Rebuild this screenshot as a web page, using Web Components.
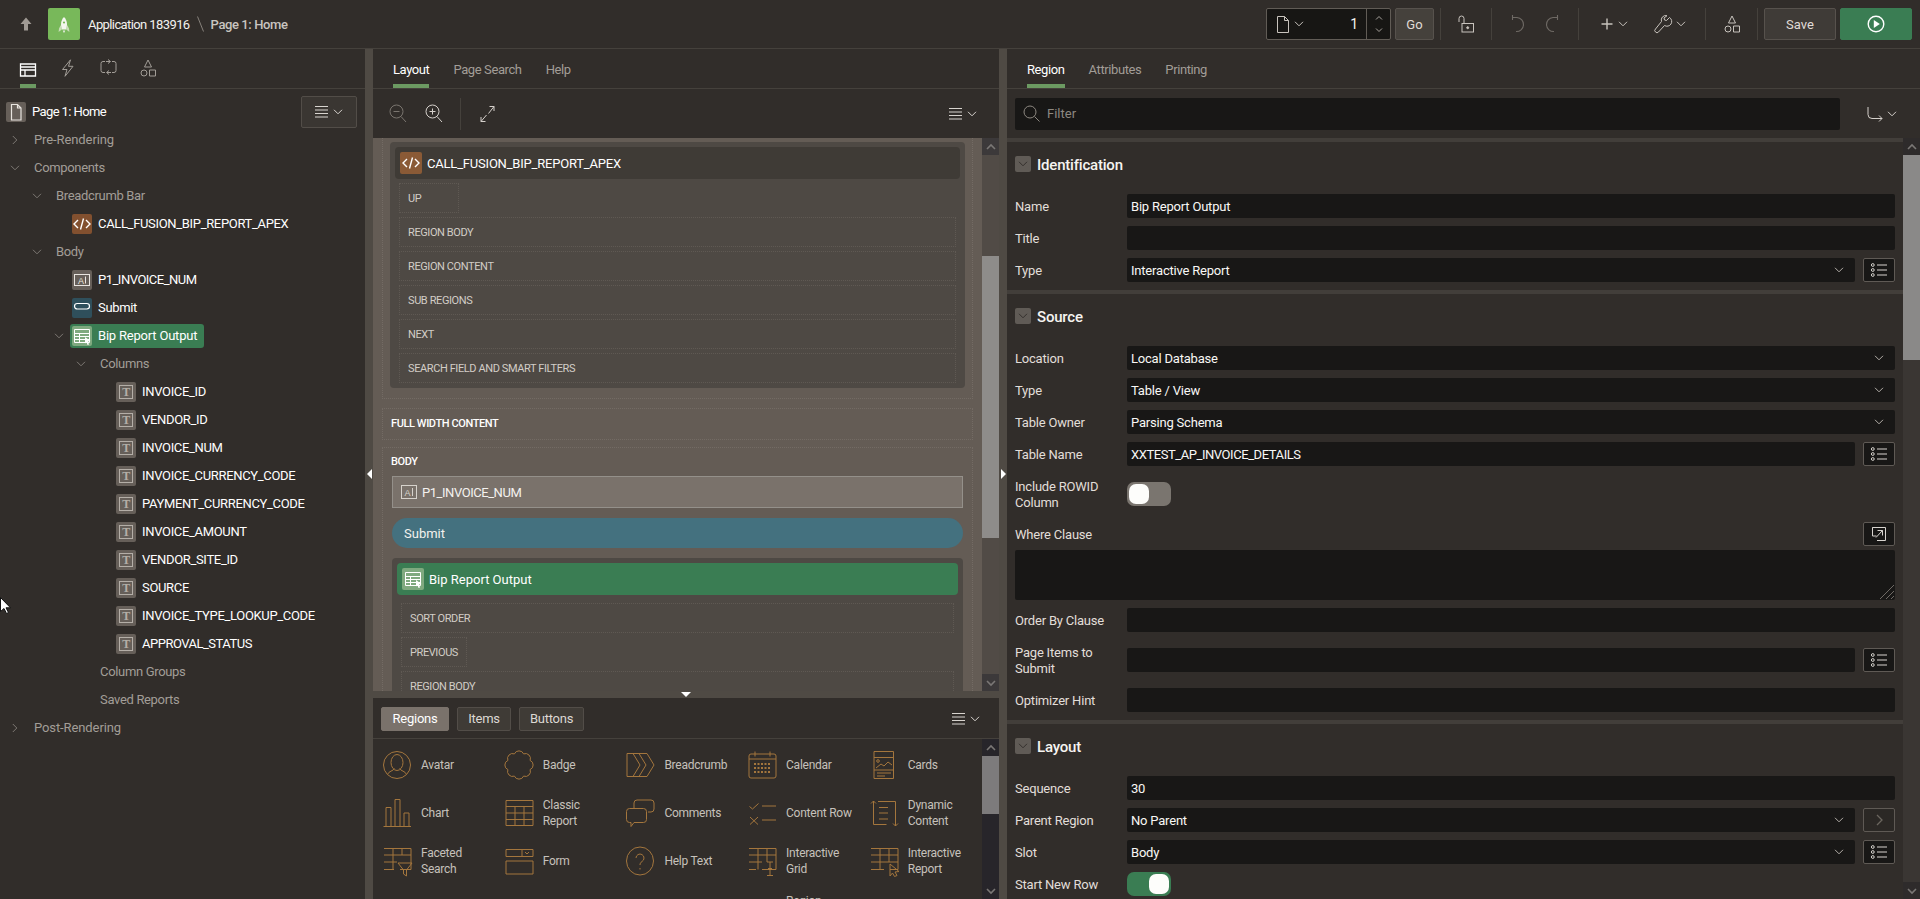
<!DOCTYPE html>
<html lang="en">
<head>
<meta charset="utf-8">
<title>Page Designer</title>
<style>
  html, body { margin: 0; height: 899px; overflow: hidden; background: #312d2a; }
  body { font-family: Roboto, "Open Sans", sans-serif; font-size: 13px; color: #fff; }
</style>
<script>
// icon helpers
const svg = (w, h, inner, extra = '') =>
  `<svg width="${w}" height="${h}" viewBox="0 0 ${w} ${h}" fill="none" stroke="currentColor" stroke-width="1" style="display:block;overflow:visible;flex:none" ${extra}>${inner}</svg>`;

const chevDown = svg(10, 6, '<path d="M1 .8l4 4 4-4"/>');
const burger = svg(13, 12, '<path d="M0 .5h13M0 4h13M0 7.5h13M0 11h13"/>');
const burgerMenu = `<span style="display:flex;align-items:center;gap:5px">${burger}${chevDown}</span>`;

const ICONS = {
  page: svg(20, 20, '<path d="M5.5 2.5h6l3.500 3.500v12h-9.500zM11.500 2.500v3.500h3.500" stroke-width="1.200"/>'),
  code: svg(20, 20, '<path d="M6 6l-4 4 4 4M14 6l4 4-4 4M11.500 4.500l-3 11" stroke-width="1.400"/>'),
  text: svg(20, 20, '<rect x="2.500" y="4.500" width="15" height="11"/><text x="6" y="13.500" font-size="9" font-family="Liberation Sans" fill="currentColor" stroke="none" aria-hidden="true">A</text><path d="M13.500 6.500v7"/>'),
  button: svg(20, 20, '<rect x="2.500" y="5.500" width="15" height="5.500" rx="2.700" stroke-width="1.200"/>'),
  report: svg(20, 20, '<path d="M2.500 3.500h15v13h-15zM2.500 7.500h15M2.500 10.500h15M2.500 13.500h15M7.500 7.500v9"/><path d="M13 11l5.500 4-2.500.500 1 3-1.500.500-1-3-1.500 1.500z" fill="#fff" stroke="none"/>'),
  column: svg(20, 20, '<rect x="3.500" y="3.500" width="13" height="13" stroke-width="1"/><text x="10" y="14" text-anchor="middle" font-size="12" font-family="Liberation Serif" font-weight="700" fill="currentColor" stroke="none" aria-hidden="true">T</text>'),

  rendering: svg(16, 14, '<path d="M.5 1h15v12H.5zM.5 4h15M.5 7h15M5 7v6" stroke-width="1.300"/>'),
  bolt: svg(14, 18, '<path d="M9.500.800L1.500 10.500h4.500l-2 6.800 8-10h-4.500z"/>'),
  loop: svg(17, 16, '<path d="M5 2.500H3a2 2 0 0 0-2 2v7a2 2 0 0 0 2 2h2M12 13.500h2a2 2 0 0 0 2-2v-7a2 2 0 0 0-2-2h-2M8 .500L10.500 2.500 8 4.500M9 11.500l-2.500 2 2.500 2M6 2.500h4M7 13.500h4"/>'),
  shapes: svg(18, 18, '<path d="M9 1l3.500 7h-7zM10.500 11h6v6h-6z"/><circle cx="5" cy="14" r="3"/>'),

  arrowUp: svg(12, 14, '<path d="M6 .5L.5 7H4v6.500h4V7h3.500z" fill="currentColor" stroke="none"/>'),
  rocket: svg(32, 32, '<path d="M16 9c-2 2-3 4.500-3 7.500l.5 5h5l.5-5C19 13.500 18 11 16 9z" fill="#f3f6ef" stroke="none"/><path d="M12.800 17l-1.800 3.500-.4 3.500 2.900-2.300zM19.200 17l1.800 3.500.4 3.500-2.900-2.300z" fill="#c9ddb9" stroke="none"/><path d="M14.800 22.500h2.400l-.6 2h-1.200z" fill="#dfe9d7" stroke="none"/><circle cx="16" cy="14.500" r="1.100" fill="#78b85a" stroke="none"/>'),
  doc: svg(12, 17, '<path d="M.5.500h7l4 4v12H.500zM7.500.500v4h4"/>'),
  lock: svg(18, 18, '<rect x="5" y="8.500" width="11.500" height="8.500"/><circle cx="10.700" cy="12.700" r="1" fill="currentColor"/><path d="M2 7V3.500a2.500 2.500 0 0 1 5 0V8"/>'),
  undo: svg(16, 20, '<path d="M3.500 3.500H8a7 7 0 1 1-1 14M3.500 1v5" stroke-width="1.100"/>'),
  redo: svg(16, 20, '<path d="M12.500 3.500H8a7 7 0 1 0 1 14M12.500 1v5" stroke-width="1.100"/>'),
  plus: svg(12, 12, '<path d="M6 .5v11M.5 6h11" stroke-width="1.400"/>'),
  wrench: svg(17, 19, '<path d="M15.500 2.500l-3 3-2-.5-.5-2 3-2.300a4.500 4.500 0 0 0-5.500 5.800L1.500 14a2 2 0 0 0 0 3 2 2 0 0 0 3 0l6-6.500a4.500 4.500 0 0 0 5-8z"/>'),
  play: svg(18, 18, '<circle cx="9" cy="9" r="7.800" stroke-width="1.400"/><path d="M6.800 5l6 4-6 4z" fill="currentColor" stroke="none"/>'),

  zoomOut: svg(18, 19, '<circle cx="7.500" cy="7.500" r="6.500"/><path d="M4.500 7.500h6M12 12.500l5 5.500"/>'),
  zoomIn: svg(18, 19, '<circle cx="7.500" cy="7.500" r="6.500"/><path d="M4.500 7.500h6M7.500 4.500v6M12 12.500l5 5.500"/>'),
  expand: svg(15, 18, '<path d="M8.500 8.500L14 1.500M9.500 1.500H14V6M6.500 10L1 16.500M1 12v4.500h4.500"/>'),
  search: svg(17, 17, '<circle cx="7" cy="7" r="6"/><path d="M11.500 11.500l5 5"/>'),
  rewind: svg(16, 16, '<path d="M1 1v7.500a4 4 0 0 0 4 4h10M12 9.500l3 3-3 3"/>'),
  list: svg(16, 14, '<circle cx="1.800" cy="2" r="1.400"/><circle cx="1.800" cy="7" r="1.400"/><circle cx="1.800" cy="12" r="1.400"/><path d="M6 2h10M6 7h10M6 12h10"/>'),
  popout: svg(14, 14, '<path d="M5 .5H.5V9h4M.5.500h13v13H5M4 10.500L10.500 3.500M5.500 3.500h5v5" stroke-width="1"/>'),
  next: svg(7, 12, '<path d="M1 1l5 5-5 5" stroke-width="1.300"/>'),
  triL: svg(5, 10, '<path d="M5 0v10L0 5z" fill="currentColor" stroke="none"/>'),
  triR: svg(5, 10, '<path d="M0 0v10l5-5z" fill="currentColor" stroke="none"/>'),
  triD: svg(10, 5, '<path d="M0 0h10L5 5z" fill="currentColor" stroke="none"/>'),
  barUp: svg(10, 6, '<path d="M1 5l4-4 4 4" stroke-width="1.600"/>'),
  barDown: svg(10, 6, '<path d="M1 1l4 4 4-4" stroke-width="1.600"/>'),
};

const GALLERY = {
  avatar: '<ellipse cx="14" cy="14" rx="13.500" ry="13.500"/><ellipse cx="14" cy="11.500" rx="6" ry="8"/><path d="M4.500 23.500c1-3.500 6-3.500 7-6M23.500 23.500c-1-3.500-6-3.500-7-6"/>',
  badge: '<path d="M9.400 2.900A5 5 0 0 1 18.600 2.900A5 5 0 0 1 25.100 9.400A5 5 0 0 1 25.100 18.600A5 5 0 0 1 18.600 25.100A5 5 0 0 1 9.400 25.100A5 5 0 0 1 2.900 18.600A5 5 0 0 1 2.900 9.400A5 5 0 0 1 9.400 2.900z"/>',
  breadcrumb: '<path d="M1 2.500h20l7 11.500-7 11.500H1zM7 2.500L14 14 7 25.500M13 2.500L20 14l-7 11.500"/>',
  calendar: '<rect x="1" y="3" width="27" height="24" rx="2"/><path d="M1 8h27M7 .5v5M22 .5v5"/><path d="M6 13h17M6 17h17M6 21h17" stroke-width="2" stroke-dasharray="2 1.500"/>',
  cards: '<path d="M4 .5h19.500v27H4zM4 6.500h19.500M4 19h19.500M7 22h14M7 25h8"/><circle cx="8" cy="10" r="1.300"/><path d="M6 17l5-4 3 2 4-4 4 3"/>',
  chart: '<path d="M3 27V8.500h5V27M12 27V.5h5V27M21 27V14h5v13M.5 27.500h27.500"/>',
  classic: '<path d="M1 1.500h27v25H1zM1 7.500h27M1 14h27M1 20.500h27M10 7.500v19M19 7.500v19"/>',
  comments: '<path d="M8 9V4a3 3 0 0 1 3-3h14a3 3 0 0 1 3 3v6a3 3 0 0 1-3 3h-3"/><path d="M3.500 9.500h14a3 3 0 0 1 3 3v8a3 3 0 0 1-3 3H8l-3 4v-4H3.500a3 3 0 0 1-3-3v-8a3 3 0 0 1 3-3z"/>',
  contentRow: '<path d="M1.500 7.500l3 2.500 6-5.500M14 7h14M2 18l8 7.500M10 18l-8 7.500M14 21h14"/>',
  dynamic: '<path d="M3.500 2v23.500h13M1 4.500L3.500 2 6 4.500M8 2.500h17.500V27M23 24.500l2.500 2.500 2.500-2.500M9 8.500h9M9 14h9M9 20h9"/>',
  faceted: '<path d="M1 1.500h27v21H17M11 22.500H1zM1 8h27M1 15h13M10 1.500v21M19 1.500v6.500"/><path d="M15 16h14l-5.500 7v6l-3-2v-4z"/>',
  form: '<path d="M1 2.500h27v7H1zM1 14h27v13H1zM17 2.500v7M20 5l2 2 2-2"/>',
  help: '<ellipse cx="14" cy="14" rx="13.500" ry="14"/><path d="M10 11a4 4 0 1 1 6 3.500c-1.500 1-2 2-2 3.500M14 21v1.500"/>',
  grid: '<path d="M1 1.500h27v21H14M8 22.500H1zM1 8h27M1 15h13M10 1.500v21M19 1.500V15"/><path d="M19 15h6M19 28.500h6M22 15v13.500M20 21.500h4"/>',
  ir: '<path d="M1 1.500h27v21h-8M14 22.500H1zM1 8h27M1 15h27M10 1.500v21M19 1.500v13.500"/><path d="M20 17l9 7.500-4 .5 2 3.500-2.500 1-2-3.500-2.500 3z"/>',
};

// base class, subclasses give styles and markup
class BaseElement extends HTMLElement {
  constructor() {
    super();
    this.attachShadow({ mode: 'open' });
  }
  connectedCallback() {
    this.shadowRoot.innerHTML = `<style>${this.constructor.styles}</style>${this.markup()}`;
  }
}

class PaneSplitter extends BaseElement {
  static get styles() {
    return /* css */`
      :host { display: flex; align-items: center; justify-content: center; background: #4f4a44; color: #fff; }
    `;
  }
  markup() { return ICONS[this.getAttribute('arrow')]; }
}

class FakeScrollbar extends BaseElement {
  static get styles() {
    return /* css */`
      :host { display: flex; flex-direction: column; width: 17px; flex: none; background: var(--track, #514b46); }
      .btn { height: 17px; flex: none; display: flex; align-items: center; justify-content: center; background: var(--btn, #3c393a); color: #7a7775; }
      .thumb { background: var(--thumb, #8e8c8a); flex: none; }
      .rest { flex: 1; }
    `;
  }
  markup() {
    const top = this.getAttribute('top') || 0;
    const size = this.getAttribute('size') || 0;
    return /* html */`
      <div class="btn">${ICONS.barUp}</div>
      <div style="height:${top}px;flex:none"></div>
      <div class="thumb" style="height:${size}px"></div>
      <div class="rest"></div>
      <div class="btn">${ICONS.barDown}</div>`;
  }
}

class TabBar extends BaseElement {
  static get styles() {
    return /* css */`
      :host { display: flex; height: 39px; gap: 24px; padding-left: 20px; border-bottom: 1px solid #45413c; flex: none; }
    `;
  }
  markup() { return '<slot></slot>'; }
}

class TabItem extends BaseElement {
  static get styles() {
    return /* css */`
      :host { display: flex; align-items: center; height: 39px; box-sizing: border-box; padding-top: 2px; color: #a29d97; font-size: 13px; letter-spacing: -.4px; position: relative; }
      :host([active]) { color: #fff; box-shadow: inset 0 -4px 0 #6c9a62; }
    `;
  }
  markup() { return '<slot></slot>'; }
}

class TreeRow extends BaseElement {
  static get styles() {
    return /* css */`
      :host { display: flex; align-items: center; height: 28px; color: #a29d97; font-size: 13px; letter-spacing: -.33px; white-space: nowrap; flex: none; }
      :host([icon]) { color: #fff; }
      .arrow { width: 12px; display: flex; justify-content: center; color: #7d7873; flex: none; }
      .content { display: inline-flex; align-items: center; gap: 6px; }
      .label { display: block; margin-bottom: 2px; }
      .tile { width: 20px; height: 20px; border-radius: 2px; background: #665f59; color: #e8e4df; display: block; flex: none; }
      :host([icon=code]) .tile { background: #82502f; color: #fff; }
      :host([icon=button]) .tile { background: #2f4f5b; color: #fff; }
      :host([icon=report]) .tile { background: #7fa97f; color: #fff; }
      :host([icon=column]) .tile { color: #b4aea7; }
      :host([selected]) .content { background: #3a7d53; padding: 2px 7px 2px 2px; margin-left: -2px; border-radius: 3px; }
    `;
  }
  markup() {
    const lvl = Number(this.getAttribute('lvl') || 0);
    const icon = this.getAttribute('icon');
    const arrow = this.getAttribute('arrow');
    const textX = icon ? 28 + 22 * lvl : 34 + 22 * lvl;
    const arrowX = 9 + 22 * lvl;
    let lead = `<span style="width:${textX}px;flex:none"></span>`;
    if (arrow) {
      const glyph = arrow === 'open' ? chevDown : svg(6, 10, '<path d="M.8 1l4 4-4 4"/>');
      lead = `<span style="width:${arrowX}px;flex:none"></span><span class="arrow">${glyph}</span><span style="width:${textX - arrowX - 12}px;flex:none"></span>`;
    }
    const tile = icon ? `<span class="tile">${ICONS[icon]}</span>` : '';
    return `${lead}<span class="content">${tile}<span class="label"><slot></slot></span></span>`;
  }
}

class MenuButton extends BaseElement {
  static get styles() {
    return /* css */`
      :host { display: flex; align-items: center; justify-content: center; width: 56px; height: 32px; box-sizing: border-box; background: #3a3632; border: 1px solid #524d48; border-radius: 2px; color: #d8d4cf; flex: none; }
    `;
  }
  markup() { return burgerMenu; }
}

class TreePanel extends BaseElement {
  static get styles() {
    return /* css */`
      :host { display: flex; flex-direction: column; background: #312d2a; overflow: hidden; }
      .tabs { display: flex; height: 39px; gap: 24px; padding-left: 20px; border-bottom: 1px solid #45413c; color: #a29d97; flex: none; }
      .tab { width: 16px; height: 39px; box-sizing: border-box; padding-top: 10px; display: flex; justify-content: center; overflow: visible; }
      .tab.on { color: #fff; box-shadow: inset 0 -4px 0 #6c9a62; padding-top: 14px; }
      .head { display: flex; align-items: center; justify-content: space-between; height: 28px; margin-top: 9px; padding-right: 8px; flex: none; }
    `;
  }
  markup() {
    return /* html */`
      <div class="tabs">
        <div class="tab on">${ICONS.rendering}</div>
        <div class="tab">${ICONS.bolt}</div>
        <div class="tab">${ICONS.loop}</div>
        <div class="tab">${ICONS.shapes}</div>
      </div>
      <div class="head"><slot name="head"></slot><menu-button></menu-button></div>
      <slot></slot>`;
  }
}

class SlotBox extends BaseElement {
  static get styles() {
    return /* css */`
      :host { display: flex; flex-direction: column; box-sizing: border-box; border: 1px dotted #736b64; color: #ded9d3; font-size: 11px; letter-spacing: -.4px; flex: none; }
      :host([sub]) { height: 30px; justify-content: center; padding: 0 8px; border-color: #5f5953; color: #d2cdc7; }
      :host([narrow]) { align-self: flex-start; min-width: 60px; }
      :host([band]) { color: #fff; font-weight: 500; padding: 0 8px 2px; }
    `;
  }
  markup() { return '<slot></slot>'; }
}

class RegionCard extends BaseElement {
  static get styles() {
    return /* css */`
      :host { display: flex; flex-direction: column; background: #4e4944; border-radius: 4px; padding: 5px; gap: 4px; flex: none; }
      .bar { display: flex; align-items: center; gap: 5px; height: 32px; padding-left: 5px; border-radius: 4px; background: #3f3b36; font-size: 13px; letter-spacing: -.2px; color: #fff; flex: none; margin-bottom: var(--bar-gap, 0); }
      .tile { width: 22px; height: 22px; background: #8a5a36; border-radius: 2px; display: flex; align-items: center; justify-content: center; }
      :host([kind=report]) .bar { background: #3a7d53; letter-spacing: 0; }
      :host([kind=report]) .tile { background: #7fa97f; }
      .slots { display: flex; flex-direction: column; gap: 4px; padding: 0 4px; }
    `;
  }
  markup() {
    const kind = this.getAttribute('kind');
    return /* html */`
      <div class="bar"><span class="tile">${ICONS[kind === 'report' ? 'report' : 'code']}</span>${this.getAttribute('name')}</div>
      <div class="slots"><slot></slot></div>`;
  }
}

class CanvasItem extends BaseElement {
  static get styles() {
    return /* css */`
      :host { display: flex; align-items: center; gap: 7px; box-sizing: border-box; height: 32px; padding-left: 8px; background: #7a726b; border: 1px solid #94908a; font-size: 13px; letter-spacing: -.45px; color: #f3f1ee; flex: none; }
      :host([kind=button]) { height: 30px; padding-left: 12px; background: #44717f; border: 0; border-radius: 15px; letter-spacing: 0; }
      .ic { color: #d6d2cc; margin-right: -2px; }
    `;
  }
  markup() {
    const isBtn = this.getAttribute('kind') === 'button';
    return `${isBtn ? '' : `<span class="ic">${svg(16, 14, '<rect x=".5" y=".5" width="15" height="13"/><text x="3.500" y="10.500" font-size="9" font-family="Liberation Sans" fill="currentColor" stroke="none" aria-hidden="true">A</text><path d="M11.500 3v8"/>')}</span>`}<slot></slot>`;
  }
}

class LayoutPanel extends BaseElement {
  static get styles() {
    return /* css */`
      :host { display: flex; flex-direction: column; background: #312d2a; overflow: hidden; }
      .tools { display: flex; align-items: center; height: 49px; flex: none; padding-left: 16px; box-sizing: border-box; }
      .tools span { display: block; }
      .sep { width: 1px; height: 32px; background: #45413c; margin: 0 19px 0 17px; }
      .menu { margin-left: auto; margin-right: 22px; color: #d8d4cf; }
      .canvas { display: flex; height: 553px; flex: none; background: #645c55; overflow: hidden; }
      .scroll { flex: 1; min-width: 0; display: flex; flex-direction: column; padding: 0 9px; gap: 0; overflow: hidden; }
    `;
  }
  markup() {
    return /* html */`
      <slot name="tabs"></slot>
      <div class="tools">
        <span style="color:#7a756f">${ICONS.zoomOut}</span>
        <span style="color:#d5d0cb;margin-left:18px">${ICONS.zoomIn}</span>
        <span class="sep"></span>
        <span style="color:#d5d0cb">${ICONS.expand}</span>
        <span class="menu">${burgerMenu}</span>
      </div>
      <div class="canvas">
        <div class="scroll"><slot></slot></div>
        <fake-scrollbar top="101" size="282"></fake-scrollbar>
      </div>
      <pane-splitter arrow="triD" style="height:7px;flex:none"></pane-splitter>
      <slot name="gallery"></slot>`;
  }
}

class GalleryPanel extends BaseElement {
  static get styles() {
    return /* css */`
      :host { display: flex; flex-direction: column; flex: 1; min-height: 0; overflow: hidden; background: #312d2a; }
      .bar { display: flex; align-items: center; gap: 8px; height: 41px; box-sizing: border-box; padding: 1px 19px 0 8px; border-bottom: 1px solid #45413c; flex: none; }
      .b { height: 24px; box-sizing: border-box; display: flex; align-items: center; justify-content: center; background: #3f3b36; border: 1px solid #524d48; border-radius: 2px; color: #dcd8d3; font-size: 13px; letter-spacing: -.25px; }
      .b.on { background: #7a726b; border-color: #7a726b; color: #fff; }
      .menu { margin-left: auto; color: #d8d4cf; }
      .body { display: flex; flex: 1; min-height: 0; }
      .grid { flex: 1; min-width: 0; overflow: hidden; padding: 2px 0 0 10px; display: grid; grid-template-columns: repeat(5, 121.700px); grid-auto-rows: 48px; }
    `;
  }
  markup() {
    return /* html */`
      <div class="bar">
        <div class="b on" style="width:68px">Regions</div><div class="b" style="width:54px">Items</div><div class="b" style="width:65px">Buttons</div>
        <span class="menu">${burgerMenu}</span>
      </div>
      <div class="body">
        <div class="grid"><slot></slot></div>
        <fake-scrollbar top="0" size="58" style="--track:#27252a;--thumb:#7d7b7c;--btn:#27252a"></fake-scrollbar>
      </div>`;
  }
}

class GalleryItem extends BaseElement {
  static get styles() {
    return /* css */`
      :host { display: flex; align-items: center; gap: 10px; color: #c6c1bb; font-size: 12px; letter-spacing: -.25px; line-height: 16px; min-width: 0; }
      .ic { width: 28px; height: 28px; color: #a4763d; flex: none; }
    `;
  }
  markup() {
    const g = GALLERY[this.getAttribute('icon')];
    return `<span class="ic">${g ? svg(28, 28, g) : ''}</span><span><slot></slot></span>`;
  }
}

class PropSection extends BaseElement {
  static get styles() {
    return /* css */`
      :host { display: block; border-top: 4px solid #423e3a; padding: 0 8px; }
      .head { display: flex; align-items: center; gap: 6px; height: 52px; box-sizing: border-box; padding-bottom: 8px; font-size: 15px; font-weight: 500; letter-spacing: -.2px; color: #f6f4f1; }
      .head b { font-weight: inherit; padding-top: 1px; }
      .tog { width: 16px; height: 16px; background: #605b56; border-radius: 2px; display: flex; align-items: center; justify-content: center; color: #34302d; }
    `;
  }
  markup() {
    return /* html */`
      <div class="head"><span class="tog">${chevDown}</span><b>${this.getAttribute('name')}</b></div>
      <slot></slot>`;
  }
}

class PropRow extends BaseElement {
  static get styles() {
    return /* css */`
      :host { display: flex; align-items: center; min-height: 24px; margin-bottom: 8px; font-size: 13px; letter-spacing: -.2px; color: #e2ded9; }
      :host([tall]) { height: 40px; }
      :host([area]) { margin-bottom: 4px; }
      .label { width: 112px; flex: none; line-height: 16px; padding-top: 1px; }
      .field { flex: 1; min-width: 0; height: 24px; display: flex; align-items: center; justify-content: space-between; box-sizing: border-box; padding: 0 11px 0 4px; background: #181716; border-radius: 2px; color: #f8f7f5; }
      :host([caps]) .field { letter-spacing: -.44px; }
      .field svg { color: #b3aea8; }
      .btn { width: 32px; height: 24px; margin-left: 8px; box-sizing: border-box; flex: none; display: flex; align-items: center; justify-content: center; background: #181716; border: 1px solid #5f5a55; border-radius: 2px; color: #d8d4cf; }
      .btn.off { background: #2b2825; color: #6b665f; }
      .space { flex: 1; }
      .switch { width: 44px; height: 24px; border-radius: 7px; background: #7a756f; padding: 2px; box-sizing: border-box; display: flex; }
      .switch i { width: 20px; height: 20px; border-radius: 7px; background: #fdfdfb; }
      .switch.on { background: #3a7d53; justify-content: flex-end; }
    `;
  }
  markup() {
    const kind = this.getAttribute('kind') || 'text';
    const action = this.getAttribute('action');
    const value = this.getAttribute('value') || '';
    const label = `<span class="label">${this.getAttribute('label')}</span>`;
    const btn = action ? `<span class="btn ${action === 'next' ? 'off' : ''}">${ICONS[action]}</span>` : '';
    if (kind === 'switch') {
      const on = this.hasAttribute('checked');
      return `${label}<span class="switch ${on ? 'on' : ''}"><i></i></span>`;
    }
    if (kind === 'button') {
      return `<span class="label">${this.getAttribute('label')}</span><span class="space"></span>${btn}`;
    }
    return `${label}<span class="field"><span>${value}</span>${kind === 'select' ? chevDown : ''}</span>${btn}`;
  }
}

class WhereBox extends BaseElement {
  static get styles() {
    return /* css */`
      :host { display: block; position: relative; height: 50px; margin-bottom: 8px; background: #181716; border-radius: 2px; }
      svg { position: absolute; right: 1px; bottom: 1px; color: #6f6a65; }
    `;
  }
  markup() { return svg(14, 14, '<path d="M0 14L14 0M6 14l8-8M11 14l3-3"/>'); }
}

class PropPanel extends BaseElement {
  static get styles() {
    return /* css */`
      :host { display: flex; flex-direction: column; background: #312d2a; overflow: hidden; }
      .filter { display: flex; align-items: center; height: 49px; flex: none; padding: 0 0 0 8px; box-sizing: border-box; }
      .input { width: 825px; height: 32px; box-sizing: border-box; display: flex; align-items: center; gap: 7px; padding-left: 8px; background: #181716; border-radius: 2px; color: #8d8881; }
      .go { margin-left: 27px; display: flex; align-items: center; gap: 4px; color: #d5d0cb; }
      .body { display: flex; flex: 1; min-height: 0; }
      .sections { flex: 1; min-width: 0; overflow: hidden; }
    `;
  }
  markup() {
    return /* html */`
      <slot name="tabs"></slot>
      <div class="filter">
        <div class="input">${ICONS.search}<span>Filter</span></div>
        <div class="go">${ICONS.rewind}${chevDown}</div>
      </div>
      <div class="body">
        <div class="sections"><slot></slot></div>
        <fake-scrollbar top="0" size="205" style="--track:#3a3633;--thumb:#8a8988;--btn:#2e2b2b"></fake-scrollbar>
      </div>`;
  }
}

class BuilderHeader extends BaseElement {
  static get styles() {
    return /* css */`
      :host { display: flex; align-items: center; height: 49px; box-sizing: border-box; border-bottom: 1px solid #45413c; padding-right: 8px; background: #312d2a; font-size: 13px; }
      .up { margin-left: 20px; color: #a09a94; }
      .tile { width: 32px; height: 32px; margin-left: 16px; background: #78b85a; border-radius: 2px; }
      .crumb { margin-left: 8px; color: #f3f1ee; white-space: nowrap; letter-spacing: -.6px; }
      .slash { margin: 0 7px; color: #86817b; }
      .page { font-weight: 500; color: #c9c5c0; white-space: nowrap; letter-spacing: -.4px; }
      .right { margin-left: auto; display: flex; align-items: center; }
      .field { display: flex; align-items: center; width: 125px; height: 32px; box-sizing: border-box; background: #171614; border: 1px solid #615c56; border-radius: 2px; color: #c8c3bd; }
      .field .sel { display: flex; align-items: center; gap: 5px; padding-left: 10px; }
      .field .num { flex: 1; text-align: right; padding-right: 8px; color: #f3f1ee; font-size: 14px; }
      .step { width: 24px; height: 30px; border-left: 1px solid #615c56; box-sizing: border-box; display: flex; flex-direction: column; align-items: center; justify-content: space-between; padding: 6px 0; color: #a8a39d; }
      .b { height: 32px; box-sizing: border-box; display: flex; align-items: center; justify-content: center; border-radius: 2px; background: #3f3b37; border: 1px solid #57524d; color: #e0dcd7; }
      .go { width: 39px; margin-left: 4px; background: #45413c; }
      .sep { width: 1px; height: 32px; background: #45413c; flex: none; }
      .cell { height: 32px; display: flex; align-items: center; justify-content: center; gap: 5px; color: #c8c3bd; flex: none; }
      .dis { color: #6f6a65; }
      .run { background: #3a7d53; border-color: #3a7d53; color: #fff; width: 72px; margin-left: 4px; }
    `;
  }
  markup() {
    return /* html */`
      <span class="up">${ICONS.arrowUp}</span>
      <span class="tile">${ICONS.rocket}</span>
      <span class="crumb">Application 183916</span>
      <span class="slash">${svg(7, 16, '<path d="M.5.500l6 15"/>')}</span>
      <span class="page">Page 1: Home</span>
      <div class="right">
        <div class="field">
          <span class="sel">${ICONS.doc}${chevDown}</span>
          <span class="num">1</span>
          <span class="step">${svg(8, 5, '<path d="M1 4.500l3-3 3 3"/>')}${svg(8, 5, '<path d="M1 .5l3 3 3-3"/>')}</span>
        </div>
        <div class="b go">Go</div>
        <span class="sep" style="margin-left:6px"></span>
        <span class="cell" style="width:50px">${ICONS.lock}</span>
        <span class="sep"></span>
        <span class="cell dis" style="width:86px;gap:20px">${ICONS.undo}${ICONS.redo}</span>
        <span class="sep"></span>
        <span class="cell" style="width:7px"></span>
        <span class="cell" style="width:56px">${ICONS.plus}${chevDown}</span>
        <span class="cell" style="width:56px">${ICONS.wrench}${chevDown}</span>
        <span class="cell" style="width:7px"></span>
        <span class="sep"></span>
        <span class="cell" style="width:51px">${ICONS.shapes}</span>
        <span class="sep"></span>
        <div class="b" style="width:72px;margin-left:6px">Save</div>
        <div class="b run">${ICONS.play}</div>
      </div>`;
  }
}

class BuilderApp extends BaseElement {
  static get styles() {
    return /* css */`
      :host { display: grid; position: relative; width: 1920px; height: 899px; overflow: hidden; grid-template-columns: 365px 8px 626px 8px 913px; grid-template-rows: 49px 850px; }
      .top { grid-column: 1 / -1; }
      .cursor { position: absolute; left: 0; top: 597px; }
    `;
  }
  markup() {
    return /* html */`
      <div class="top"><slot name="header"></slot></div>
      <slot name="tree"></slot>
      <pane-splitter arrow="triL"></pane-splitter>
      <slot name="layout"></slot>
      <pane-splitter arrow="triR"></pane-splitter>
      <slot name="props"></slot>
      <svg class="cursor" width="12" height="17" viewBox="0 0 12 17"><path d="M.5.500v14l3.500-3 2.500 5 2-1-2.500-4.700h4.500z" fill="#fff" stroke="#111"/></svg>`;
  }
}

customElements.define('pane-splitter', PaneSplitter);
customElements.define('fake-scrollbar', FakeScrollbar);
customElements.define('tab-bar', TabBar);
customElements.define('tab-item', TabItem);
customElements.define('tree-row', TreeRow);
customElements.define('menu-button', MenuButton);
customElements.define('tree-panel', TreePanel);
customElements.define('slot-box', SlotBox);
customElements.define('region-card', RegionCard);
customElements.define('canvas-item', CanvasItem);
customElements.define('layout-panel', LayoutPanel);
customElements.define('gallery-panel', GalleryPanel);
customElements.define('gallery-item', GalleryItem);
customElements.define('prop-section', PropSection);
customElements.define('prop-row', PropRow);
customElements.define('where-box', WhereBox);
customElements.define('prop-panel', PropPanel);
customElements.define('builder-header', BuilderHeader);
customElements.define('builder-app', BuilderApp);
</script>
</head>
<body>
<builder-app>
  <builder-header slot="header"></builder-header>

  <tree-panel slot="tree">
    <tree-row slot="head" lvl="-1" icon="page" style="letter-spacing:-.6px">Page 1: Home</tree-row>
    <tree-row lvl="0" arrow="closed" style="letter-spacing:-.1px">Pre-Rendering</tree-row>
    <tree-row lvl="0" arrow="open">Components</tree-row>
    <tree-row lvl="1" arrow="open">Breadcrumb Bar</tree-row>
    <tree-row lvl="2" icon="code">CALL_FUSION_BIP_REPORT_APEX</tree-row>
    <tree-row lvl="1" arrow="open">Body</tree-row>
    <tree-row lvl="2" icon="text" style="letter-spacing:-.5px">P1_INVOICE_NUM</tree-row>
    <tree-row lvl="2" icon="button">Submit</tree-row>
    <tree-row lvl="2" icon="report" arrow="open" selected style="letter-spacing:-.2px">Bip Report Output</tree-row>
    <tree-row lvl="3" arrow="open">Columns</tree-row>
    <tree-row lvl="4" icon="column">INVOICE_ID</tree-row>
    <tree-row lvl="4" icon="column">VENDOR_ID</tree-row>
    <tree-row lvl="4" icon="column">INVOICE_NUM</tree-row>
    <tree-row lvl="4" icon="column">INVOICE_CURRENCY_CODE</tree-row>
    <tree-row lvl="4" icon="column">PAYMENT_CURRENCY_CODE</tree-row>
    <tree-row lvl="4" icon="column">INVOICE_AMOUNT</tree-row>
    <tree-row lvl="4" icon="column">VENDOR_SITE_ID</tree-row>
    <tree-row lvl="4" icon="column">SOURCE</tree-row>
    <tree-row lvl="4" icon="column">INVOICE_TYPE_LOOKUP_CODE</tree-row>
    <tree-row lvl="4" icon="column" style="letter-spacing:-.5px">APPROVAL_STATUS</tree-row>
    <tree-row lvl="3">Column Groups</tree-row>
    <tree-row lvl="3">Saved Reports</tree-row>
    <tree-row lvl="0" arrow="closed" style="letter-spacing:-.1px">Post-Rendering</tree-row>
  </tree-panel>

  <layout-panel slot="layout">
    <tab-bar slot="tabs"><tab-item active>Layout</tab-item><tab-item>Page Search</tab-item><tab-item>Help</tab-item></tab-bar>

    <slot-box style="border-top:0;padding:4px 7px 6px;height:261px">
      <region-card name="CALL_FUSION_BIP_REPORT_APEX">
        <slot-box sub narrow>UP</slot-box>
        <slot-box sub>REGION BODY</slot-box>
        <slot-box sub>REGION CONTENT</slot-box>
        <slot-box sub>SUB REGIONS</slot-box>
        <slot-box sub>NEXT</slot-box>
        <slot-box sub>SEARCH FIELD AND SMART FILTERS</slot-box>
      </region-card>
    </slot-box>
    <slot-box band style="height:32px;margin-top:9px;justify-content:center">FULL WIDTH CONTENT</slot-box>
    <slot-box style="margin-top:7px;padding:6px 9px 0;height:300px;border-bottom:0">
      <div style="height:16px;line-height:16px;font-weight:500;color:#fff;margin:0 -1px 6px">BODY</div>
      <canvas-item>P1_INVOICE_NUM</canvas-item>
      <canvas-item kind="button" style="margin-top:10px">Submit</canvas-item>
      <region-card kind="report" name="Bip Report Output" style="margin-top:10px;--bar-gap:4px">
        <slot-box sub>SORT ORDER</slot-box>
        <slot-box sub narrow>PREVIOUS</slot-box>
        <slot-box sub>REGION BODY</slot-box>
      </region-card>
    </slot-box>

    <gallery-panel slot="gallery">
      <gallery-item icon="avatar">Avatar</gallery-item>
      <gallery-item icon="badge">Badge</gallery-item>
      <gallery-item icon="breadcrumb">Breadcrumb</gallery-item>
      <gallery-item icon="calendar">Calendar</gallery-item>
      <gallery-item icon="cards">Cards</gallery-item>
      <gallery-item icon="chart">Chart</gallery-item>
      <gallery-item icon="classic">Classic<br>Report</gallery-item>
      <gallery-item icon="comments">Comments</gallery-item>
      <gallery-item icon="contentRow">Content Row</gallery-item>
      <gallery-item icon="dynamic">Dynamic<br>Content</gallery-item>
      <gallery-item icon="faceted">Faceted<br>Search</gallery-item>
      <gallery-item icon="form">Form</gallery-item>
      <gallery-item icon="help">Help Text</gallery-item>
      <gallery-item icon="grid">Interactive<br>Grid</gallery-item>
      <gallery-item icon="ir">Interactive<br>Report</gallery-item>
      <gallery-item></gallery-item>
      <gallery-item></gallery-item>
      <gallery-item></gallery-item>
      <gallery-item>Region<br>&nbsp;</gallery-item>
    </gallery-panel>
  </layout-panel>

  <prop-panel slot="props">
    <tab-bar slot="tabs"><tab-item active>Region</tab-item><tab-item>Attributes</tab-item><tab-item>Printing</tab-item></tab-bar>

    <prop-section name="Identification">
      <prop-row label="Name" value="Bip Report Output"></prop-row>
      <prop-row label="Title"></prop-row>
      <prop-row label="Type" kind="select" value="Interactive Report" action="list"></prop-row>
    </prop-section>
    <prop-section name="Source">
      <prop-row label="Location" kind="select" value="Local Database"></prop-row>
      <prop-row label="Type" kind="select" value="Table / View"></prop-row>
      <prop-row label="Table Owner" kind="select" value="Parsing Schema"></prop-row>
      <prop-row label="Table Name" value="XXTEST_AP_INVOICE_DETAILS" action="list" caps></prop-row>
      <prop-row label="Include ROWID Column" kind="switch" tall></prop-row>
      <prop-row label="Where Clause" kind="button" action="popout" area></prop-row>
      <where-box></where-box>
      <prop-row label="Order By Clause"></prop-row>
      <prop-row label="Page Items to Submit" action="list" tall></prop-row>
      <prop-row label="Optimizer Hint"></prop-row>
    </prop-section>
    <prop-section name="Layout">
      <prop-row label="Sequence" value="30"></prop-row>
      <prop-row label="Parent Region" kind="select" value="No Parent" action="next"></prop-row>
      <prop-row label="Slot" kind="select" value="Body" action="list"></prop-row>
      <prop-row label="Start New Row" kind="switch" checked></prop-row>
    </prop-section>
  </prop-panel>
</builder-app>
</body>
</html>
